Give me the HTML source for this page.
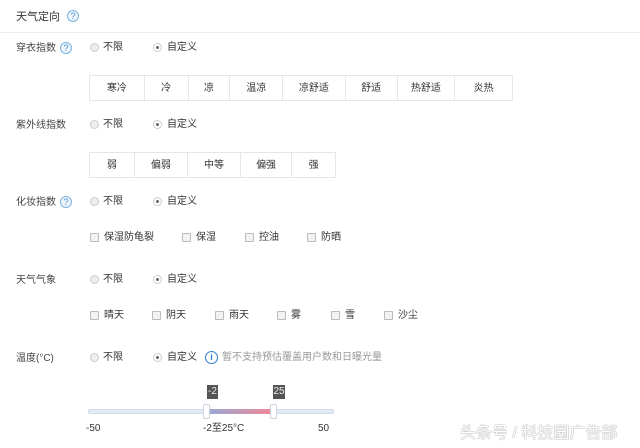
<!DOCTYPE html>
<html><head><meta charset="utf-8"><style>
*{margin:0;padding:0;box-sizing:border-box}
body{width:640px;height:448px;background:#fff;position:relative;overflow:hidden;font-family:"Liberation Sans","Noto Sans CJK SC",sans-serif;font-size:10px;color:#333}
.a{position:absolute;white-space:nowrap;line-height:12px}
.lbl{color:#444}
.q{position:absolute;width:12px;height:12px;border:1px solid #7ab3e0;border-radius:50%;color:#4a90d0;font-size:9px;line-height:10px;text-align:center;background:#eef5fc}
.r{position:absolute;width:9px;height:9px;border:1px solid #ccc;border-radius:50%;background:#eee}
.r.on{background:#fff}
.r.on:after{content:"";position:absolute;left:2px;top:2px;width:3px;height:3px;border-radius:50%;background:#666}
.c{position:absolute;width:9px;height:9px;border:1px solid #bbb;background:#f2f2f2;border-radius:1px}
.t{position:absolute;display:flex;border:1px solid #e6e6e6;height:26px}
.t div{border-left:1px solid #e6e6e6;text-align:center;line-height:26px;font-size:10px;color:#333}
.t div:first-child{border-left:none}
</style></head><body>
<div class="a" style="left:16px;top:11px;font-size:11px;color:#333">天气定向</div>
<div class="q" style="left:67px;top:10px">?</div>
<div style="position:absolute;left:0;top:32px;width:640px;height:1px;background:#eee"></div>

<div class="a lbl" style="left:16px;top:43px">穿衣指数</div><div class="q" style="left:60px;top:42px">?</div>
<div class="r" style="left:90px;top:43px"></div><div class="a" style="left:103px;top:42px">不限</div>
<div class="r on" style="left:153px;top:43px"></div><div class="a" style="left:167px;top:42px">自定义</div>
<div class="t" style="left:89px;top:75px;width:424px">
<div style="width:54px">寒冷</div><div style="width:44px">冷</div><div style="width:42px">凉</div><div style="width:53px">温凉</div><div style="width:63px">凉舒适</div><div style="width:52px">舒适</div><div style="width:58px">热舒适</div><div style="width:58px">炎热</div></div>

<div class="a lbl" style="left:16px;top:120px">紫外线指数</div>
<div class="r" style="left:90px;top:120px"></div><div class="a" style="left:103px;top:119px">不限</div>
<div class="r on" style="left:153px;top:120px"></div><div class="a" style="left:167px;top:119px">自定义</div>
<div class="t" style="left:89px;top:152px;width:247px">
<div style="width:44px">弱</div><div style="width:54px">偏弱</div><div style="width:53px">中等</div><div style="width:52px">偏强</div><div style="width:44px">强</div></div>

<div class="a lbl" style="left:16px;top:197px">化妆指数</div><div class="q" style="left:60px;top:196px">?</div>
<div class="r" style="left:90px;top:197px"></div><div class="a" style="left:103px;top:196px">不限</div>
<div class="r on" style="left:153px;top:197px"></div><div class="a" style="left:167px;top:196px">自定义</div>
<div class="c" style="left:90px;top:233px"></div><div class="a" style="left:104px;top:232px">保湿防龟裂</div>
<div class="c" style="left:182px;top:233px"></div><div class="a" style="left:196px;top:232px">保湿</div>
<div class="c" style="left:245px;top:233px"></div><div class="a" style="left:259px;top:232px">控油</div>
<div class="c" style="left:307px;top:233px"></div><div class="a" style="left:321px;top:232px">防晒</div>

<div class="a lbl" style="left:16px;top:275px">天气气象</div>
<div class="r" style="left:90px;top:275px"></div><div class="a" style="left:103px;top:274px">不限</div>
<div class="r on" style="left:153px;top:275px"></div><div class="a" style="left:167px;top:274px">自定义</div>
<div class="c" style="left:90px;top:311px"></div><div class="a" style="left:104px;top:310px">晴天</div>
<div class="c" style="left:152px;top:311px"></div><div class="a" style="left:166px;top:310px">阴天</div>
<div class="c" style="left:215px;top:311px"></div><div class="a" style="left:229px;top:310px">雨天</div>
<div class="c" style="left:277px;top:311px"></div><div class="a" style="left:291px;top:310px">雾</div>
<div class="c" style="left:331px;top:311px"></div><div class="a" style="left:345px;top:310px">雪</div>
<div class="c" style="left:384px;top:311px"></div><div class="a" style="left:398px;top:310px">沙尘</div>

<div class="a lbl" style="left:16px;top:353px">温度(°C)</div>
<div class="r" style="left:90px;top:353px"></div><div class="a" style="left:103px;top:352px">不限</div>
<div class="r on" style="left:153px;top:353px"></div><div class="a" style="left:167px;top:352px">自定义</div>
<div style="position:absolute;left:205px;top:351px;width:13px;height:13px;border:1.5px solid #2f7fd0;border-radius:50%;color:#2f7fd0;font-size:9px;font-weight:bold;line-height:10px;text-align:center">i</div>
<div class="a" style="left:222px;top:352px;color:#999">暂不支持预估覆盖用户数和日曝光量</div>

<div class="a" style="left:207px;top:385px;width:11px;height:14px;background:#555;color:#eee;font-size:10px;line-height:14px;text-align:center">-2</div>
<div class="a" style="left:273px;top:385px;width:12px;height:14px;background:#555;color:#eee;font-size:10px;line-height:14px;text-align:center">25</div>
<div style="position:absolute;left:88px;top:409px;width:246px;height:5px;background:#e3ebf5;border:1px solid #d3dcea;border-radius:2px"></div>
<div style="position:absolute;left:209px;top:409px;width:63px;height:5px;background:linear-gradient(90deg,#9aa8d6,#ee8894)"></div>
<div style="position:absolute;left:203px;top:404px;width:7px;height:15px;background:#fff;border:1px solid #c9d1e0;border-radius:2px"></div>
<div style="position:absolute;left:270px;top:404px;width:7px;height:15px;background:#fff;border:1px solid #c9d1e0;border-radius:2px"></div>
<div class="a" style="left:86px;top:423px;font-size:10px">-50</div>
<div class="a" style="left:203px;top:423px;font-size:10px">-2至25°C</div>
<div class="a" style="left:318px;top:423px;font-size:10px">50</div>

<div class="a" style="left:460px;top:425px;font-size:16px;line-height:18px;color:#fff;text-shadow:0 0 1px #aaa,0 0 1px #aaa,0 0 1px #bbb">头条号 / 科技园广告部</div>
</body></html>
